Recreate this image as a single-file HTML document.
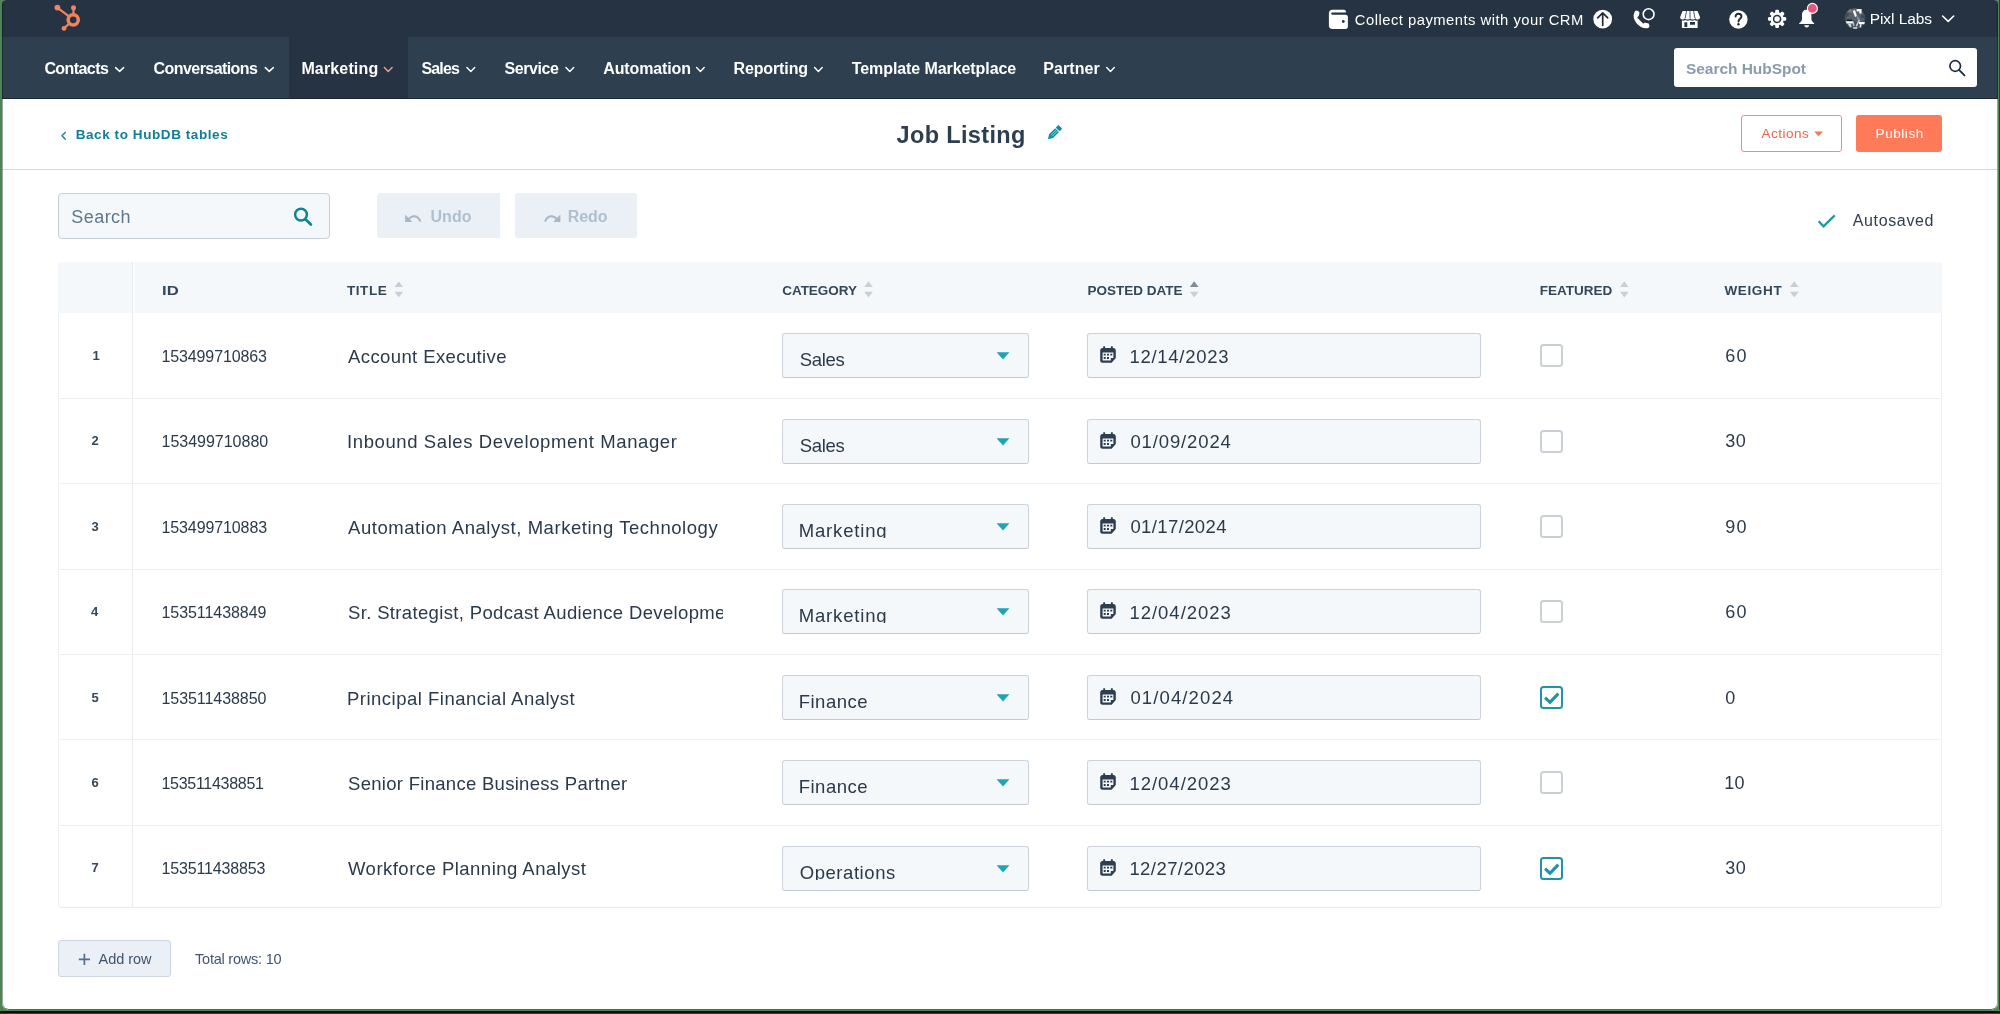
<!DOCTYPE html>
<html lang="en">
<head>
<meta charset="utf-8">
<title>Job Listing</title>
<style>
*{box-sizing:border-box;margin:0;padding:0}
html,body{width:2000px;height:1014px;overflow:hidden}
body{background:#4b8752;font-family:"Liberation Sans",sans-serif;color:#33475b;position:relative}
.t{position:absolute;white-space:nowrap;line-height:1}
.a{position:absolute;display:block}
#botstrip{position:absolute;left:0;top:1010px;width:2000px;height:4px;background:#111}
#botstrip i{position:absolute;left:0;width:2000px;display:block}
#win{position:absolute;left:2px;top:0;width:1996px;height:1010px;background:#fff;border-radius:4px 4px 7px 7px;overflow:hidden}
#win:after{content:'';box-sizing:border-box;position:absolute;left:0;top:-2px;width:1996px;height:1012px;border:1px solid rgba(10,10,20,.38);border-bottom-color:rgba(0,0,0,.62);border-radius:4px 4px 7px 7px}
#rstrip{position:absolute;left:1999px;top:0;width:1px;height:1014px;background:#383838}
#pg{position:absolute;left:-2px;top:0;width:2000px;height:1014px;will-change:transform}
#topbar{left:0;top:0;width:2000px;height:37px;background:#253342}
#nav{left:0;top:37px;width:2000px;height:62px;background:#2e3f50;border-bottom:1px solid #1b2633}
#navact{left:289px;top:37px;width:119px;height:61px;background:#253342}
#hsearch{left:1674px;top:48px;width:303px;height:39px;background:#fff;border-radius:3px}
#hdrline{left:0;top:169px;width:2000px;height:1px;background:#d4dae4}
#sbox{left:58px;top:193px;width:272px;height:46px;background:#f5f8fa;border:1px solid #c6ced7;border-radius:4px}
.dbtn{top:193px;height:45px;background:#eaf0f6}
#bAct{left:1741px;top:115px;width:101px;height:37px;border:1px solid #f58e73;border-radius:3px;background:#fff}
#bPub{left:1856px;top:115px;width:86px;height:37px;border-radius:3px;background:#ff7a59}
#tbl{left:58px;top:262px;width:1884px;height:646px;border-radius:4px;overflow:hidden;border-left:1px solid #eef1f5;border-right:1px solid #eef1f5;border-bottom:1px solid #e6ebf0;background:#fff}
#thead{left:58px;top:262px;width:1884px;height:51px;background:#f5f8fa;border-radius:4px 4px 0 0}
#vline{left:132px;top:262px;width:1px;height:646px;background:#e8ecf0}
#vline2{left:133px;top:262px;width:2px;height:51px;background:#fbfcfd}
.hl{left:59px;width:1882px;height:1px;background:#eef1f4}
.sel,.dt{width:247px;height:45px;background:#f5f8fa;border:1px solid #ccd3db;border-radius:3px;border-bottom-color:#c3cad3}
.sel{left:782px}
.dt{left:1087px;width:394px}
.cb{left:1540px;width:23px;height:23px;border:2px solid #c9d0d9;border-radius:3.5px;background:#fff}
.cb.on{border-color:#1f93a8}
#addrow{left:58px;top:940px;width:113px;height:37px;background:#eaf0f6;border:1px solid #cbd6e2;border-radius:3px}
svg{overflow:visible}
</style>
</head>
<body>
<div id="rstrip"></div>
<div id="botstrip"><i style="top:0;height:1px;background:#4b8752"></i><i style="top:1px;height:2px;background:#0a0a0a"></i><i style="top:3px;height:1px;background:#3a3d3a"></i></div>
<div id="win"><div id="pg">
<div class="a" id="topbar"></div>
<div class="a" id="nav"></div>
<div class="a" id="navact"></div>
<div class="a" id="hsearch"></div>
<div class="a" id="hdrline"></div>
<div class="a" id="sbox"></div>
<div class="a dbtn" style="left:377px;width:123px;border-radius:3px 0 0 3px"></div>
<div class="a dbtn" style="left:515px;width:122px;border-radius:3px"></div>
<div class="a" id="bAct"></div>
<div class="a" id="bPub"></div>
<div class="a" id="tbl"></div>
<div class="a" id="thead"></div>
<div class="a" id="vline"></div><div class="a" id="vline2"></div>
<div class="a sel" style="top:333px"></div><div class="a dt" style="top:333px"></div><svg class="a" style="left:995.5px;top:351.8px" width="14" height="8" viewBox="0 0 14 8"><path d="M0.6 0.3h12.8L7 7.6z" fill="#1fa3b8"/></svg><svg class="a" style="left:1099.5px;top:346.2px" width="16" height="17" viewBox="0 0 16 17"><path fill="#2d3e50" d="M3.2 0.3h1.9v1.8h5.8V0.3h1.9v1.8h0.7c1.3 0 2.3 1 2.3 2.3v7.6l-4.2 4.7H2.5c-1.3 0-2.3-1-2.3-2.3V4.4c0-1.300 1-2.300 2.300-2.300h0.700z"/><path fill="#f5f8fa" d="M2.6 6.6h10.800v5.300h-2.600v2.700H2.600z"/><path fill="#2d3e50" d="M3.700 7.700h2v1.900h-2zM7 7.700h2v1.900h-2zM10.300 7.700h2v1.900h-2zM3.700 11h2v1.900h-2zM7 11h2v1.900h-2z"/></svg><div class="a cb" style="top:344px"></div>
<div class="a hl" style="top:398px"></div>
<div class="a sel" style="top:419px"></div><div class="a dt" style="top:419px"></div><svg class="a" style="left:995.5px;top:437.8px" width="14" height="8" viewBox="0 0 14 8"><path d="M0.6 0.3h12.8L7 7.6z" fill="#1fa3b8"/></svg><svg class="a" style="left:1099.5px;top:432.2px" width="16" height="17" viewBox="0 0 16 17"><path fill="#2d3e50" d="M3.2 0.3h1.9v1.8h5.8V0.3h1.9v1.8h0.7c1.3 0 2.3 1 2.3 2.3v7.6l-4.2 4.7H2.5c-1.3 0-2.3-1-2.3-2.3V4.4c0-1.300 1-2.300 2.300-2.300h0.700z"/><path fill="#f5f8fa" d="M2.6 6.6h10.800v5.300h-2.600v2.700H2.600z"/><path fill="#2d3e50" d="M3.700 7.700h2v1.900h-2zM7 7.700h2v1.900h-2zM10.300 7.700h2v1.900h-2zM3.700 11h2v1.900h-2zM7 11h2v1.900h-2z"/></svg><div class="a cb" style="top:430px"></div>
<div class="a hl" style="top:483px"></div>
<div class="a sel" style="top:504px"></div><div class="a dt" style="top:504px"></div><svg class="a" style="left:995.5px;top:522.8px" width="14" height="8" viewBox="0 0 14 8"><path d="M0.6 0.3h12.8L7 7.6z" fill="#1fa3b8"/></svg><svg class="a" style="left:1099.5px;top:517.2px" width="16" height="17" viewBox="0 0 16 17"><path fill="#2d3e50" d="M3.2 0.3h1.9v1.8h5.8V0.3h1.9v1.8h0.7c1.3 0 2.3 1 2.3 2.3v7.6l-4.2 4.7H2.5c-1.3 0-2.3-1-2.3-2.3V4.4c0-1.300 1-2.300 2.300-2.300h0.700z"/><path fill="#f5f8fa" d="M2.6 6.6h10.800v5.300h-2.600v2.700H2.600z"/><path fill="#2d3e50" d="M3.700 7.700h2v1.900h-2zM7 7.700h2v1.900h-2zM10.300 7.700h2v1.900h-2zM3.700 11h2v1.900h-2zM7 11h2v1.900h-2z"/></svg><div class="a cb" style="top:515px"></div>
<div class="a hl" style="top:569px"></div>
<div class="a sel" style="top:589px"></div><div class="a dt" style="top:589px"></div><svg class="a" style="left:995.5px;top:607.8px" width="14" height="8" viewBox="0 0 14 8"><path d="M0.6 0.3h12.8L7 7.6z" fill="#1fa3b8"/></svg><svg class="a" style="left:1099.5px;top:602.2px" width="16" height="17" viewBox="0 0 16 17"><path fill="#2d3e50" d="M3.2 0.3h1.9v1.8h5.8V0.3h1.9v1.8h0.7c1.3 0 2.3 1 2.3 2.3v7.6l-4.2 4.7H2.5c-1.3 0-2.3-1-2.3-2.3V4.4c0-1.300 1-2.300 2.300-2.300h0.700z"/><path fill="#f5f8fa" d="M2.6 6.6h10.800v5.300h-2.600v2.700H2.600z"/><path fill="#2d3e50" d="M3.700 7.700h2v1.900h-2zM7 7.700h2v1.900h-2zM10.300 7.700h2v1.900h-2zM3.700 11h2v1.900h-2zM7 11h2v1.900h-2z"/></svg><div class="a cb" style="top:600px"></div>
<div class="a hl" style="top:654px"></div>
<div class="a sel" style="top:675px"></div><div class="a dt" style="top:675px"></div><svg class="a" style="left:995.5px;top:693.8px" width="14" height="8" viewBox="0 0 14 8"><path d="M0.6 0.3h12.8L7 7.6z" fill="#1fa3b8"/></svg><svg class="a" style="left:1099.5px;top:688.2px" width="16" height="17" viewBox="0 0 16 17"><path fill="#2d3e50" d="M3.2 0.3h1.9v1.8h5.8V0.3h1.9v1.8h0.7c1.3 0 2.3 1 2.3 2.3v7.6l-4.2 4.7H2.5c-1.3 0-2.3-1-2.3-2.3V4.4c0-1.300 1-2.300 2.300-2.300h0.700z"/><path fill="#f5f8fa" d="M2.6 6.6h10.800v5.300h-2.600v2.700H2.600z"/><path fill="#2d3e50" d="M3.700 7.700h2v1.900h-2zM7 7.700h2v1.900h-2zM10.300 7.700h2v1.900h-2zM3.700 11h2v1.900h-2zM7 11h2v1.900h-2z"/></svg><div class="a cb on" style="top:686px"></div><svg class="a" style="left:1540px;top:686px" width="23" height="23" viewBox="0 0 23 23"><path d="M5.100 11.700l4.900 4.700 8.300-8.800" fill="none" stroke="#1f93a8" stroke-width="3.100"/></svg>
<div class="a hl" style="top:739px"></div>
<div class="a sel" style="top:760px"></div><div class="a dt" style="top:760px"></div><svg class="a" style="left:995.5px;top:778.8px" width="14" height="8" viewBox="0 0 14 8"><path d="M0.6 0.3h12.8L7 7.6z" fill="#1fa3b8"/></svg><svg class="a" style="left:1099.5px;top:773.2px" width="16" height="17" viewBox="0 0 16 17"><path fill="#2d3e50" d="M3.2 0.3h1.9v1.8h5.8V0.3h1.9v1.8h0.7c1.3 0 2.3 1 2.3 2.3v7.6l-4.2 4.7H2.5c-1.3 0-2.3-1-2.3-2.3V4.4c0-1.300 1-2.300 2.300-2.300h0.700z"/><path fill="#f5f8fa" d="M2.6 6.6h10.800v5.300h-2.600v2.700H2.600z"/><path fill="#2d3e50" d="M3.700 7.700h2v1.900h-2zM7 7.700h2v1.900h-2zM10.300 7.700h2v1.900h-2zM3.700 11h2v1.900h-2zM7 11h2v1.900h-2z"/></svg><div class="a cb" style="top:771px"></div>
<div class="a hl" style="top:825px"></div>
<div class="a sel" style="top:846px"></div><div class="a dt" style="top:846px"></div><svg class="a" style="left:995.5px;top:864.8px" width="14" height="8" viewBox="0 0 14 8"><path d="M0.6 0.3h12.8L7 7.6z" fill="#1fa3b8"/></svg><svg class="a" style="left:1099.5px;top:859.2px" width="16" height="17" viewBox="0 0 16 17"><path fill="#2d3e50" d="M3.2 0.3h1.9v1.8h5.8V0.3h1.9v1.8h0.7c1.3 0 2.3 1 2.3 2.3v7.6l-4.2 4.7H2.5c-1.3 0-2.3-1-2.3-2.3V4.4c0-1.300 1-2.300 2.300-2.300h0.700z"/><path fill="#f5f8fa" d="M2.6 6.6h10.800v5.300h-2.600v2.700H2.600z"/><path fill="#2d3e50" d="M3.700 7.700h2v1.900h-2zM7 7.700h2v1.900h-2zM10.300 7.700h2v1.900h-2zM3.700 11h2v1.900h-2zM7 11h2v1.900h-2z"/></svg><div class="a cb on" style="top:857px"></div><svg class="a" style="left:1540px;top:857px" width="23" height="23" viewBox="0 0 23 23"><path d="M5.100 11.700l4.900 4.700 8.300-8.800" fill="none" stroke="#1f93a8" stroke-width="3.100"/></svg>

<div class="a" id="addrow"></div>
<svg class="a" style="left:0;top:0" width="2000" height="1014" viewBox="0 0 2000 1014">
<defs><filter id="bl" x="-10%" y="-10%" width="120%" height="120%"><feGaussianBlur stdDeviation="0.35"/></filter></defs>
<g fill="#f5825f" stroke="#f5825f"><circle cx="73.2" cy="19.8" r="5.1" fill="none" stroke-width="3.5"/><circle cx="73.5" cy="7.7" r="2.5" stroke="none"/><path d="M73.5 8v7" stroke-width="2.2" fill="none"/><circle cx="57.4" cy="7.6" r="2.9" stroke="none"/><path d="M57.6 7.800L69 16.300" stroke-width="2.200" fill="none"/><circle cx="64" cy="28.400" r="2.400" stroke="none"/><path d="M64 28.400l5-4.600" stroke-width="2.200" fill="none"/></g>
<path d="M115.6 67.6L119.6 71.4L123.6 67.6" fill="none" stroke="#fff" stroke-width="1.45" stroke-linecap="round" stroke-linejoin="round"/>
<path d="M265.3 67.6L269.3 71.4L273.3 67.6" fill="none" stroke="#fff" stroke-width="1.45" stroke-linecap="round" stroke-linejoin="round"/>
<path d="M384.4 67.6L388.2 71.4L392.1 67.6" fill="none" stroke="#e3a48f" stroke-width="1.45" stroke-linecap="round" stroke-linejoin="round"/>
<path d="M466.9 67.6L470.8 71.4L474.7 67.6" fill="none" stroke="#fff" stroke-width="1.45" stroke-linecap="round" stroke-linejoin="round"/>
<path d="M565.9 67.6L569.8 71.4L573.7 67.6" fill="none" stroke="#fff" stroke-width="1.45" stroke-linecap="round" stroke-linejoin="round"/>
<path d="M696.6 67.6L700.4 71.4L704.2 67.6" fill="none" stroke="#fff" stroke-width="1.45" stroke-linecap="round" stroke-linejoin="round"/>
<path d="M814.6 67.6L818.4 71.4L822.2 67.6" fill="none" stroke="#fff" stroke-width="1.45" stroke-linecap="round" stroke-linejoin="round"/>
<path d="M1106.7 67.6L1110.5 71.4L1114.3 67.6" fill="none" stroke="#fff" stroke-width="1.45" stroke-linecap="round" stroke-linejoin="round"/>
<path fill="#fff" d="M1328.900 13.200c0-1.900 1.500-3.400 3.400-3.400h11.700c1.100 0 1.900 0.800 1.900 1.900v0.800h-13.500c-0.700 0-1.200 0.500-1.200 1.100s0.500 1.200 1.200 1.200h13.300c1.200 0 2.200 1 2.200 2.200v9.800c0 1.200-1 2.200-2.200 2.200h-13.600c-1.800 0-3.200-1.400-3.200-3.200z"/><circle cx="1343.300" cy="21.500" r="1.400" fill="#253342"/>
<circle cx="1602.700" cy="19.100" r="9.400" fill="#fff"/><path d="M1602.700 25.300V13.200M1597.700 17.900l5-5 5 5" fill="none" stroke="#1f2a36" stroke-width="1.700" stroke-linecap="round" stroke-linejoin="round"/>
<path d="M1636.800 13.300C1634.500 18.500 1640.500 26 1646.800 25.600" fill="none" stroke="#fff" stroke-width="5.200" stroke-linecap="round"/><path d="M1640.400 14.200l-3.300 3.300 6.200 6.200 3.300-3.300z" fill="#253342"/><circle cx="1648.600" cy="14.200" r="5.400" fill="#253342" stroke="#fff" stroke-width="1.600"/>
<path fill="#fff" d="M1682.600 10.900h14.900l2.500 6.200c0.300 1.600-0.900 2.500-2.200 2.500-1.200 0-2.100-0.700-2.500-1.700-0.400 1-1.300 1.700-2.600 1.700s-2.200-0.700-2.600-1.700c-0.400 1-1.300 1.700-2.600 1.700s-2.200-0.700-2.600-1.700c-0.400 1-1.300 1.700-2.500 1.700-1.300 0-2.500-0.900-2.200-2.500z"/><path d="M1686.500 11l-1.300 7M1690 11v7M1693.600 11l1.300 7" stroke="#253342" stroke-width="0.800" fill="none"/><path fill="#fff" d="M1681.900 20.300c1 0.600 2.600 0.500 3.600-0.300 1.100 0.900 3.400 0.900 4.500 0 1.100 0.900 3.400 0.900 4.500 0 1 0.800 2.300 0.900 3.100 0.300v7.800h-15.700z"/><path fill="#253342" d="M1684.400 22.300h2.900v4.800h-2.900zM1690 22.100h5v2.700h-5z"/>
<circle cx="1738.400" cy="19.500" r="9.200" fill="#fff"/><path d="M1735.600 16.600c0-1.700 1.300-2.800 2.900-2.800 1.700 0 2.900 1.100 2.900 2.600 0 2.300-2.900 2.300-2.900 5" fill="none" stroke="#1f2a36" stroke-width="1.950" stroke-linecap="round"/><circle cx="1738.500" cy="24.300" r="1.200" fill="#1f2a36"/>
<g fill="#fff"><rect x="1775.20" y="9.80" width="3.800" height="5" rx="1.200" transform="rotate(0 1777.1 18.9)"/><rect x="1775.20" y="9.80" width="3.800" height="5" rx="1.200" transform="rotate(45 1777.1 18.9)"/><rect x="1775.20" y="9.80" width="3.800" height="5" rx="1.200" transform="rotate(90 1777.1 18.9)"/><rect x="1775.20" y="9.80" width="3.800" height="5" rx="1.200" transform="rotate(135 1777.1 18.9)"/><rect x="1775.20" y="9.80" width="3.800" height="5" rx="1.200" transform="rotate(180 1777.1 18.9)"/><rect x="1775.20" y="9.80" width="3.800" height="5" rx="1.200" transform="rotate(225 1777.1 18.9)"/><rect x="1775.20" y="9.80" width="3.800" height="5" rx="1.200" transform="rotate(270 1777.1 18.9)"/><rect x="1775.20" y="9.80" width="3.800" height="5" rx="1.200" transform="rotate(315 1777.1 18.9)"/><circle cx="1777.1" cy="18.9" r="6.600"/></g><circle cx="1777.1" cy="18.9" r="3.500" fill="#fff" stroke="#253342" stroke-width="1.500"/>
<path fill="#fff" d="M1806.700 9.800c-2.900 0-4.700 2.100-4.700 5v4.200c0 1.700-1.100 2.600-2.800 4.300v0.800h15v-0.800c-1.700-1.700-2.800-2.600-2.800-4.300v-4.200c0-2.900-1.800-5-4.700-5z"/><path fill="#fff" d="M1804.300 25.300h4.800c0 1.300-1.100 2.200-2.400 2.200s-2.400-0.900-2.400-2.200z"/><circle cx="1812.400" cy="8.400" r="5" fill="#e5567f" stroke="#fff" stroke-width="1.100"/>
<g filter="url(#bl)"><circle cx="1854.900" cy="18.600" r="10.400" fill="#434e5b"/><path d="M1850 9.500l5-1.500 6 2.500 3.500 5-1 5-6 2-6-3z" fill="#56616e"/><path d="M1845.200 19l4.700-5.400 4.500 5.400z" fill="#5a6068"/><path d="M1846.500 12.500l3.500-3.800 2.800 1.200-2 3.200z" fill="#6f7983"/><path d="M1852.700 11l2.300-1 2 6-2 0.900z" fill="#f2f4f6"/><path d="M1856.600 8.900h5v4.600h-2.300v-2.100h-2.700z" fill="#f4f6f8"/><path d="M1856 14.500l3.500 4.500-1.500 1z" fill="#8e9aa6"/><path d="M1847 19.800h5.200v1h-5.200z" fill="#05080c"/><path d="M1845.800 21.300h7.600l-0.500 2.300h-6.300z" fill="#fbfcfd"/><path d="M1847.500 23.600l3.500 0 0.500 3.500-1.500 0.500z" fill="#c9d1d9"/><path d="M1858.800 19.500l1.200 0.500-3 6.500-1.300-0.400z" fill="#d5dce3"/><path d="M1852.500 22h1.500l0.500 4h-1.500z" fill="#aeb9c4"/><path d="M1859 22h5.800l-0.400 2.200h-5.400z" fill="#ffffff"/><path d="M1860 24.200h1.500l-0.400 3.400h-1.600z" fill="#e8ecf0"/><path d="M1852.800 27.200h4.800l-0.800 1.500h-3.200z" fill="#dfe5ea"/><circle cx="1862.500" cy="16.500" r="1.800" fill="#3a4a5c"/></g>
<path d="M1942.6 16.0L1948.2 21.4L1953.7 16.0" fill="none" stroke="#fff" stroke-width="1.6" stroke-linecap="round" stroke-linejoin="round"/>
<circle cx="1955.200" cy="66" r="5.300" fill="none" stroke="#1f2d3d" stroke-width="1.700"/><path d="M1959 69.900l5.500 5.500" stroke="#1f2d3d" stroke-width="1.800" stroke-linecap="round"/>
<path d="M65.300 132.400L61.900 135.800l3.400 3.400" fill="none" stroke="#1f7d91" stroke-width="1.350" stroke-linecap="round" stroke-linejoin="round"/>
<g transform="translate(1055 132.100) rotate(-45)" fill="#0f8fa5"><rect x="3.700" y="-2.700" width="3.900" height="5.400" rx="0.800"/><path d="M-5.500 -2.700h8.400v5.400H-5.500l-4.500-2.700z"/><path d="M-5 -0.900h7.600M-5 0.900h7.600" stroke="#bfe6ee" stroke-width="0.700"/></g>
<path d="M1814.200 131.600h8.800l-4.400 4.700z" fill="#f2765a"/>
<circle cx="301" cy="214.600" r="5.900" fill="none" stroke="#0f8294" stroke-width="2.500"/><path d="M305.500 219.300l5.400 5.200" stroke="#0f8294" stroke-width="2.700" stroke-linecap="round"/>
<path d="M405.100 214.600v7.300h7.300z" fill="#a9b6c3"/><path d="M408.500 219.400c3.200-4.600 9.300-4.600 12 2.200" fill="none" stroke="#a9b6c3" stroke-width="1.900"/>
<path d="M560.400 214.600v7.300h-7.300z" fill="#a9b6c3"/><path d="M557 219.400c-3.200-4.600-9.300-4.600-12 2.200" fill="none" stroke="#a9b6c3" stroke-width="1.900"/>
<path d="M1818.600 221.300l5 5L1834.700 215.400" fill="none" stroke="#1e9c9c" stroke-width="2.300"/>
<path d="M394.5 287.100h8.600L398.8 281.300z" fill="#c9cfd7"/><path d="M394.5 291.700h8.600L398.8 297.400z" fill="#c9cfd7"/>
<path d="M864.2 287.100h8.600L868.5 281.300z" fill="#c9cfd7"/><path d="M864.2 291.700h8.600L868.5 297.400z" fill="#c9cfd7"/>
<path d="M1189.9 287.100h8.600L1194.2 281.300z" fill="#7f8b99"/><path d="M1189.9 291.700h8.600L1194.2 297.400z" fill="#c9cfd7"/>
<path d="M1620.0 287.100h8.600L1624.3 281.300z" fill="#c9cfd7"/><path d="M1620.0 291.700h8.600L1624.3 297.400z" fill="#c9cfd7"/>
<path d="M1790.0 287.100h8.600L1794.3 281.300z" fill="#c9cfd7"/><path d="M1790.0 291.700h8.600L1794.3 297.400z" fill="#c9cfd7"/>
<path d="M78.800 959.300h11.200M84.400 953.700v11.200" stroke="#506e91" stroke-width="1.700" fill="none"/>
</svg>

<span class="t" style="left:1354.80px;top:12.67px;font-size:14.8px;letter-spacing:0.480px;color:#fff;">Collect payments with your CRM</span>
<span class="t" style="left:1869.70px;top:10.98px;font-size:15.5px;letter-spacing:-0.068px;color:#fff;">Pixl Labs</span>
<span class="t" style="left:44.40px;top:61.26px;font-size:16px;font-weight:bold;letter-spacing:-0.579px;color:#fff;">Contacts</span>
<span class="t" style="left:153.60px;top:61.26px;font-size:16px;font-weight:bold;letter-spacing:-0.570px;color:#fff;">Conversations</span>
<span class="t" style="left:301.40px;top:61.26px;font-size:16px;font-weight:bold;letter-spacing:0.150px;color:#fff;">Marketing</span>
<span class="t" style="left:421.50px;top:61.26px;font-size:16px;font-weight:bold;letter-spacing:-0.854px;color:#fff;">Sales</span>
<span class="t" style="left:504.60px;top:61.26px;font-size:16px;font-weight:bold;letter-spacing:-0.440px;color:#fff;">Service</span>
<span class="t" style="left:603.30px;top:61.26px;font-size:16px;font-weight:bold;letter-spacing:-0.134px;color:#fff;">Automation</span>
<span class="t" style="left:733.50px;top:61.26px;font-size:16px;font-weight:bold;letter-spacing:-0.122px;color:#fff;">Reporting</span>
<span class="t" style="left:851.80px;top:61.26px;font-size:16px;font-weight:bold;letter-spacing:-0.084px;color:#fff;">Template Marketplace</span>
<span class="t" style="left:1043.30px;top:61.26px;font-size:16px;font-weight:bold;letter-spacing:0.084px;color:#fff;">Partner</span>
<span class="t" style="left:1686.00px;top:61.48px;font-size:15.5px;font-weight:bold;letter-spacing:-0.047px;color:#8a9bb0;">Search HubSpot</span>
<span class="t" style="left:75.70px;top:128.17px;font-size:13.5px;font-weight:bold;letter-spacing:0.578px;color:#0e7f96;">Back to HubDB tables</span>
<span class="t" style="left:896.50px;top:123.91px;font-size:23.5px;font-weight:bold;letter-spacing:0.353px;color:#2d3e50;">Job Listing</span>
<span class="t" style="left:1761.50px;top:127.37px;font-size:13.5px;letter-spacing:0.480px;color:#e8674a;">Actions</span>
<span class="t" style="left:1875.60px;top:127.37px;font-size:13.5px;letter-spacing:0.555px;color:#fff;">Publish</span>
<span class="t" style="left:1852.70px;top:212.66px;font-size:16px;letter-spacing:0.649px;color:#2d3e50;">Autosaved</span>
<span class="t" style="left:71.30px;top:208.16px;font-size:18px;letter-spacing:0.436px;color:#61778b;">Search</span>
<span class="t" style="left:430.50px;top:208.76px;font-size:16px;font-weight:bold;letter-spacing:0.033px;color:#b0bfce;">Undo</span>
<span class="t" style="left:567.80px;top:208.76px;font-size:16px;font-weight:bold;letter-spacing:-0.076px;color:#b0bfce;">Redo</span>
<span class="t" style="left:162.10px;top:284.37px;font-size:13.5px;font-weight:bold;color:#33475b;transform-origin:0.00px 50%;transform:scaleX(1.2363);">ID</span>
<span class="t" style="left:347.00px;top:284.37px;font-size:13.5px;font-weight:bold;letter-spacing:0.553px;color:#33475b;">TITLE</span>
<span class="t" style="left:782.20px;top:284.37px;font-size:13.5px;font-weight:bold;letter-spacing:-0.028px;color:#33475b;">CATEGORY</span>
<span class="t" style="left:1087.40px;top:284.37px;font-size:13.5px;font-weight:bold;letter-spacing:0.010px;color:#33475b;">POSTED DATE</span>
<span class="t" style="left:1539.80px;top:284.37px;font-size:13.5px;font-weight:bold;letter-spacing:0.008px;color:#33475b;">FEATURED</span>
<span class="t" style="left:1724.40px;top:284.37px;font-size:13.5px;font-weight:bold;letter-spacing:0.651px;color:#33475b;">WEIGHT</span>
<span class="t" style="left:92.60px;top:348.90px;font-size:13px;font-weight:bold;letter-spacing:-1.600px;color:#33475b;">1</span>
<span class="t" style="left:161.50px;top:348.86px;font-size:16px;letter-spacing:-0.126px;color:#2a3a4b;">153499710863</span>
<span class="t" style="left:348.00px;top:347.84px;font-size:18.5px;letter-spacing:0.397px;color:#2a3a4b;">Account Executive</span>
<span class="t" style="left:799.70px;top:350.84px;font-size:18.5px;letter-spacing:-0.332px;color:#2a3a4b;height:16.06px;overflow:hidden;">Sales</span>
<span class="t" style="left:1129.40px;top:347.64px;font-size:18.5px;letter-spacing:0.733px;color:#2a3a4b;">12/14/2023</span>
<span class="t" style="left:1725.30px;top:346.86px;font-size:18px;letter-spacing:1.189px;color:#2a3a4b;">60</span>
<span class="t" style="left:91.50px;top:434.32px;font-size:13px;font-weight:bold;letter-spacing:0.500px;color:#33475b;">2</span>
<span class="t" style="left:161.50px;top:434.28px;font-size:16px;letter-spacing:-0.008px;color:#2a3a4b;">153499710880</span>
<span class="t" style="left:347.00px;top:433.26px;font-size:18.5px;letter-spacing:0.602px;color:#2a3a4b;">Inbound Sales Development Manager</span>
<span class="t" style="left:799.70px;top:436.84px;font-size:18.5px;letter-spacing:-0.332px;color:#2a3a4b;height:16.06px;overflow:hidden;">Sales</span>
<span class="t" style="left:1130.40px;top:433.06px;font-size:18.5px;letter-spacing:0.878px;color:#2a3a4b;">01/09/2024</span>
<span class="t" style="left:1725.30px;top:432.28px;font-size:18px;letter-spacing:0.389px;color:#2a3a4b;">30</span>
<span class="t" style="left:91.50px;top:519.74px;font-size:13px;font-weight:bold;letter-spacing:0.500px;color:#33475b;">3</span>
<span class="t" style="left:161.50px;top:519.70px;font-size:16px;letter-spacing:-0.108px;color:#2a3a4b;">153499710883</span>
<span class="t" style="left:348.00px;top:518.68px;font-size:18.5px;letter-spacing:0.549px;color:#2a3a4b;">Automation Analyst, Marketing Technology</span>
<span class="t" style="left:798.70px;top:521.84px;font-size:18.5px;letter-spacing:0.833px;color:#2a3a4b;height:16.06px;overflow:hidden;">Marketing</span>
<span class="t" style="left:1130.40px;top:518.48px;font-size:18.5px;letter-spacing:0.389px;color:#2a3a4b;">01/17/2024</span>
<span class="t" style="left:1725.30px;top:517.70px;font-size:18px;letter-spacing:1.189px;color:#2a3a4b;">90</span>
<span class="t" style="left:91.00px;top:605.16px;font-size:13px;font-weight:bold;letter-spacing:0.500px;color:#33475b;">4</span>
<span class="t" style="left:161.50px;top:605.12px;font-size:16px;letter-spacing:-0.063px;color:#2a3a4b;">153511438849</span>
<span class="t" style="left:348.00px;top:604.10px;font-size:18.5px;color:#2a3a4b;width:375px;overflow:hidden;letter-spacing:0.35px;">Sr. Strategist, Podcast Audience Development</span>
<span class="t" style="left:798.70px;top:606.84px;font-size:18.5px;letter-spacing:0.833px;color:#2a3a4b;height:16.06px;overflow:hidden;">Marketing</span>
<span class="t" style="left:1129.40px;top:603.90px;font-size:18.5px;letter-spacing:0.989px;color:#2a3a4b;">12/04/2023</span>
<span class="t" style="left:1725.30px;top:603.12px;font-size:18px;letter-spacing:1.189px;color:#2a3a4b;">60</span>
<span class="t" style="left:91.50px;top:690.58px;font-size:13px;font-weight:bold;letter-spacing:0.500px;color:#33475b;">5</span>
<span class="t" style="left:161.50px;top:690.54px;font-size:16px;letter-spacing:-0.063px;color:#2a3a4b;">153511438850</span>
<span class="t" style="left:347.00px;top:689.52px;font-size:18.5px;letter-spacing:0.493px;color:#2a3a4b;">Principal Financial Analyst</span>
<span class="t" style="left:798.70px;top:692.84px;font-size:18.5px;letter-spacing:0.512px;color:#2a3a4b;height:16.06px;overflow:hidden;">Finance</span>
<span class="t" style="left:1130.40px;top:689.32px;font-size:18.5px;letter-spacing:1.122px;color:#2a3a4b;">01/04/2024</span>
<span class="t" style="left:1725.30px;top:688.54px;font-size:18px;letter-spacing:0.300px;color:#2a3a4b;">0</span>
<span class="t" style="left:91.50px;top:776.00px;font-size:13px;font-weight:bold;letter-spacing:0.500px;color:#33475b;">6</span>
<span class="t" style="left:161.50px;top:775.96px;font-size:16px;letter-spacing:-0.290px;color:#2a3a4b;">153511438851</span>
<span class="t" style="left:348.00px;top:774.94px;font-size:18.5px;letter-spacing:0.291px;color:#2a3a4b;">Senior Finance Business Partner</span>
<span class="t" style="left:798.70px;top:777.84px;font-size:18.5px;letter-spacing:0.512px;color:#2a3a4b;height:16.06px;overflow:hidden;">Finance</span>
<span class="t" style="left:1129.40px;top:774.74px;font-size:18.5px;letter-spacing:0.989px;color:#2a3a4b;">12/04/2023</span>
<span class="t" style="left:1724.30px;top:773.96px;font-size:18px;letter-spacing:0.089px;color:#2a3a4b;">10</span>
<span class="t" style="left:91.50px;top:861.42px;font-size:13px;font-weight:bold;letter-spacing:0.500px;color:#33475b;">7</span>
<span class="t" style="left:161.50px;top:861.38px;font-size:16px;letter-spacing:-0.154px;color:#2a3a4b;">153511438853</span>
<span class="t" style="left:348.00px;top:860.36px;font-size:18.5px;letter-spacing:0.481px;color:#2a3a4b;">Workforce Planning Analyst</span>
<span class="t" style="left:799.70px;top:863.84px;font-size:18.5px;letter-spacing:0.562px;color:#2a3a4b;height:16.06px;overflow:hidden;">Operations</span>
<span class="t" style="left:1129.40px;top:860.16px;font-size:18.5px;letter-spacing:0.433px;color:#2a3a4b;">12/27/2023</span>
<span class="t" style="left:1725.30px;top:859.38px;font-size:18px;letter-spacing:0.389px;color:#2a3a4b;">30</span>
<span class="t" style="left:98.60px;top:952.33px;font-size:14.5px;letter-spacing:-0.054px;color:#3f556e;">Add row</span>
<span class="t" style="left:195.00px;top:952.33px;font-size:14.5px;letter-spacing:-0.215px;color:#3f556e;">Total rows: 10</span>
</div></div>
</body>
</html>
